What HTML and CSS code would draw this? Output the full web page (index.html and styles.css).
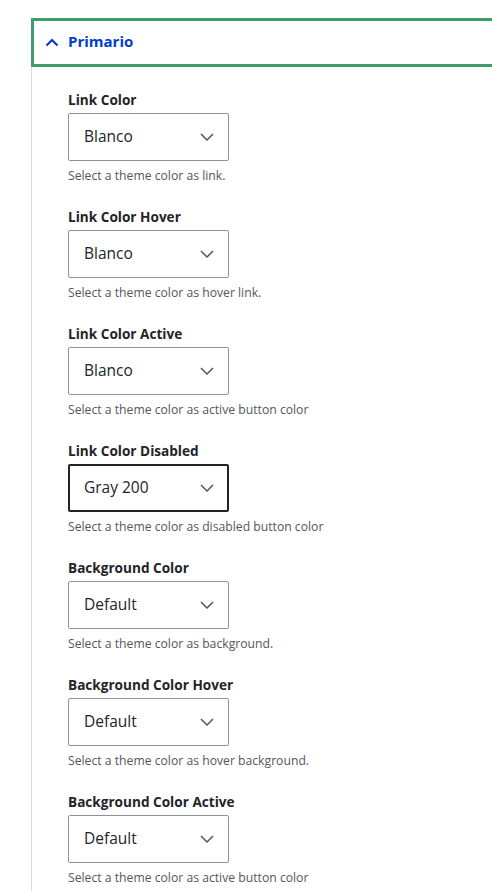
FILE: index.html
```html
<!DOCTYPE html>
<html>
<head>
<meta charset="utf-8">
<link rel="stylesheet" href="styles.css">
</head>
<body>
<div class="page">
  <div class="details">
    <div class="summary">
      <svg class="summary-icon" width="14" height="9" viewBox="0 0 14 9"><path d="M1.5 7.5 L7 2 L12.5 7.5" fill="none" stroke="#003ecc" stroke-width="2.2"/></svg>
      <span class="summary-title">Primario</span>
    </div>
    <div class="panel">
      <div class="field">
        <div class="label">Link Color</div>
        <div class="select"><span>Blanco</span><svg class="chev" width="14" height="8" viewBox="0 0 14 8"><path d="M1 1 L7 7 L13 1" fill="none" stroke="#545560" stroke-width="1.5"/></svg></div>
        <div class="desc">Select a theme color as link.</div>
      </div>
      <div class="field">
        <div class="label">Link Color Hover</div>
        <div class="select"><span>Blanco</span><svg class="chev" width="14" height="8" viewBox="0 0 14 8"><path d="M1 1 L7 7 L13 1" fill="none" stroke="#545560" stroke-width="1.5"/></svg></div>
        <div class="desc">Select a theme color as hover link.</div>
      </div>
      <div class="field">
        <div class="label">Link Color Active</div>
        <div class="select"><span>Blanco</span><svg class="chev" width="14" height="8" viewBox="0 0 14 8"><path d="M1 1 L7 7 L13 1" fill="none" stroke="#545560" stroke-width="1.5"/></svg></div>
        <div class="desc">Select a theme color as active button color</div>
      </div>
      <div class="field">
        <div class="label">Link Color Disabled</div>
        <div class="select focused"><span>Gray 200</span><svg class="chev" width="14" height="8" viewBox="0 0 14 8"><path d="M1 1 L7 7 L13 1" fill="none" stroke="#545560" stroke-width="1.5"/></svg></div>
        <div class="desc">Select a theme color as disabled button color</div>
      </div>
      <div class="field">
        <div class="label">Background Color</div>
        <div class="select"><span>Default</span><svg class="chev" width="14" height="8" viewBox="0 0 14 8"><path d="M1 1 L7 7 L13 1" fill="none" stroke="#545560" stroke-width="1.5"/></svg></div>
        <div class="desc">Select a theme color as background.</div>
      </div>
      <div class="field">
        <div class="label">Background Color Hover</div>
        <div class="select"><span>Default</span><svg class="chev" width="14" height="8" viewBox="0 0 14 8"><path d="M1 1 L7 7 L13 1" fill="none" stroke="#545560" stroke-width="1.5"/></svg></div>
        <div class="desc">Select a theme color as hover background.</div>
      </div>
      <div class="field">
        <div class="label">Background Color Active</div>
        <div class="select"><span>Default</span><svg class="chev" width="14" height="8" viewBox="0 0 14 8"><path d="M1 1 L7 7 L13 1" fill="none" stroke="#545560" stroke-width="1.5"/></svg></div>
        <div class="desc">Select a theme color as active button color</div>
      </div>
    </div>
  </div>
</div>
</body>
</html>
```
FILE: styles.css
```css
html, body {
  margin: 0;
  padding: 0;
  background: #ffffff;
  overflow: hidden;
}
body {
  font-family: "Open Sans", "Noto Sans", sans-serif;
  color: #222330;
}
.page {
  padding-top: 18px;
  padding-left: 31px;
  width: 492px;
  height: 891px;
  box-sizing: border-box;
  overflow: hidden;
}
.details {
  width: 569px;
}
.summary {
  display: flex;
  align-items: center;
  height: 43px;
  border: 3px solid #3d9f6e;
  padding-left: 11px;
}
.summary-icon {
  margin-right: 9px;
}
.summary-title {
  color: #003ecc;
  font-weight: 700;
  font-size: 15px;
  margin-top: -3px;
}
.panel {
  border-left: 1px solid #dcdde2;
  padding-left: 36px;
  padding-top: 24px;
  height: 900px;
}
.field {
  margin-bottom: 23px;
}
.label {
  font-size: 13.6px;
  font-weight: 700;
  line-height: 18px;
  margin-bottom: 4px;
  color: #232429;
}
.select {
  width: 161px;
  height: 48px;
  box-sizing: border-box;
  border: 1px solid #8e929c;
  border-radius: 2px;
  display: flex;
  align-items: center;
  justify-content: space-between;
  padding-left: 15px;
  padding-right: 14px;
  padding-bottom: 2px;
  font-size: 15.5px;
  color: #232429;
}
.select.focused {
  border: 2px solid #232429;
  padding-left: 14px;
  padding-right: 13px;
  padding-bottom: 2px;
}
.chev {
  display: block;
  margin-top: 2px;
}
.desc {
  margin-top: 6px;
  font-size: 12.2px;
  line-height: 18px;
  color: #55565b;
}
```
